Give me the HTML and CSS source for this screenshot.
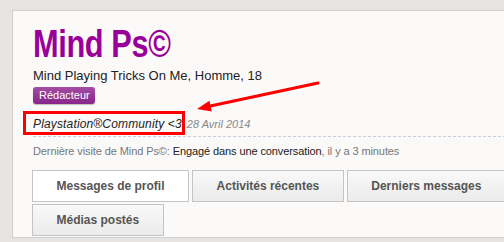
FILE: index.html
```html
<!DOCTYPE html>
<html lang="fr">
<head>
  <meta charset="UTF-8" />
  <title>Mind Ps©</title>
  <link rel="stylesheet" href="styles.css">
</head>
<body>
  <div class="profile">
    <h1 class="username">Mind Ps©</h1>
    <p class="user-blurb">Mind Playing Tricks On Me, Homme, 18</p>
    <span class="badge">Rédacteur</span>

    <div class="status-row">
      <span class="status">Playstation®Community &lt;3</span>
      <span class="status-date">28 Avril 2014</span>
    </div>

    <p class="last-visit">
      <span class="muted">Dernière visite de Mind Ps©:</span>
      Engagé dans une conversation<span class="muted">, il y a 3 minutes</span>
    </p>

    <ul class="tabs">
      <li class="tab active">Messages de profil</li>
      <li class="tab">Activités récentes</li>
      <li class="tab">Derniers messages</li>
      <li class="tab">Médias postés</li>
    </ul>

    <!-- annotation arrow pointing at the status -->
    <svg class="arrow" width="130" height="36" viewBox="0 0 130 36">
      <line x1="123" y1="4" x2="13" y2="27.5" stroke="#f00" stroke-width="3" stroke-linecap="round" />
      <polygon points="2,30 16.8,32.5 14.4,21.8" fill="#f00" />
    </svg>
  </div>
</body>
</html>
```

FILE: styles.css
```css
* {
  margin: 0;
  padding: 0;
  box-sizing: border-box;
}
body {
  background: #e6e5e3;
  font-family: 'Liberation Sans', Arial, sans-serif;
  padding: 10px 0 0 12px;
  overflow: hidden;
}
.profile {
  position: relative;
  width: 520px;
  height: 228px;
  background: #fbfaf9;
  border: 1px solid #cfcfcf;
  padding: 10px 20px 0 20px;
}
.username {
  display: inline-block;
  font-size: 38px;
  line-height: 46px;
  color: #990099;
  font-weight: bold;
  letter-spacing: -0.5px;
  transform: scaleX(0.81);
  transform-origin: left;
}
.user-blurb {
  font-size: 13px;
  color: #222;
  margin-top: 1px;
}
.badge {
  display: inline-block;
  margin-top: 4px;
  padding: 2px 5px 3px 6px;
  font-size: 11px;
  color: #fff;
  background: linear-gradient(#a44ca4, #86258a);
  border-radius: 3px;
  box-shadow: 0 1px 1px rgba(0,0,0,0.25);
}
.status-row {
  display: flex;
  align-items: baseline;
  border-bottom: 1px dashed #c4cfdb;
  padding-bottom: 5px;
  margin-top: 13px;
}
.status {
  position: relative;
  font-size: 12px;
  letter-spacing: 0.15px;
  font-style: italic;
  color: #222;
}
/* red highlight box drawn over the status text */
.status::after {
  content: "";
  position: absolute;
  left: -10px;
  right: -3px;
  top: -6px;
  bottom: -4px;
  border: 3px solid #f00;
}
.status-date {
  font-size: 11px;
  font-style: italic;
  color: #888;
  margin-left: 5px;
}
.last-visit {
  font-size: 11px;
  letter-spacing: -0.1px;
  color: #222;
  margin-top: 8px;
}
.muted {
  color: #777;
}
.tabs {
  list-style: none;
  display: flex;
  flex-wrap: wrap;
  gap: 2px 3px;
  margin-top: 13px;
  margin-left: -1px;
}
.tab {
  height: 32px;
  line-height: 30px;
  padding: 0 23.5px;
  font-size: 12px;
  font-weight: bold;
  color: #555;
  border: 1px solid #c4c4c4;
  background: linear-gradient(#f9f9f9, #ebebeb);
}
.tab.active {
  background: #fff;
}
.arrow {
  position: absolute;
  left: 182px;
  top: 68px;
}
```
